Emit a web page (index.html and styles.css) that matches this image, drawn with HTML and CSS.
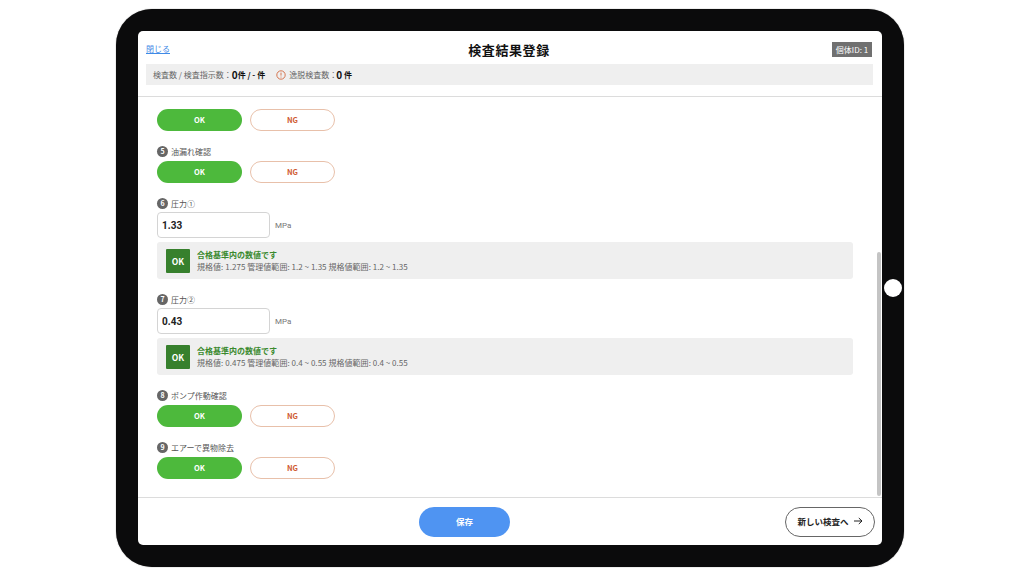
FILE: index.html
```html
<!DOCTYPE html>
<html lang="ja">
<head>
  <meta charset="utf-8">
  <title>検査結果登録</title>
  <link rel="stylesheet" href="styles.css">
</head>
<body>
  <div class="device">
    <span class="home-button"></span>
    <div class="screen">
      <header class="header">
        <div class="title-row">
          <a class="close-link">閉じる</a>
          <h1 class="title">検査結果登録</h1>
          <span class="unit-id">個体ID: 1</span>
        </div>
        <div class="info-bar">
          <span>検査数 / 検査指示数：</span><b class="count">0</b><b>件 / - 件</b>
          <svg class="warn-icon" viewBox="0 0 10 10" width="10" height="10">
            <circle cx="5" cy="5" r="4.2" fill="none" stroke="#d2693f" stroke-width="0.9"/>
            <path d="M5 2.6V5.6M5 6.6V7.5" stroke="#d2693f" stroke-width="0.9" fill="none"/>
          </svg>
          <span class="over-label">逸脱検査数：</span><b class="count">0</b><b>&nbsp;件</b>
        </div>
      </header>

      <main class="content">
        <span class="scroll-thumb"></span>

        <div class="judge-row first-row">
          <button class="btn-ok">OK</button>
          <button class="btn-ng">NG</button>
        </div>

        <section class="item">
          <div class="item-label"><span class="num">5</span>油漏れ確認</div>
          <div class="judge-row">
            <button class="btn-ok">OK</button>
            <button class="btn-ng">NG</button>
          </div>
        </section>

        <section class="item">
          <div class="item-label"><span class="num">6</span>圧力①</div>
          <div class="input-row">
            <input class="value-input" type="text" value="1.33">
            <span class="unit">MPa</span>
          </div>
          <div class="result">
            <span class="result-badge">OK</span>
            <div>
              <p class="result-title">合格基準内の数値です</p>
              <p class="result-text">規格値: 1.275 管理値範囲: 1.2 ~ 1.35 規格値範囲: 1.2 ~ 1.35</p>
            </div>
          </div>
        </section>

        <section class="item">
          <div class="item-label"><span class="num">7</span>圧力②</div>
          <div class="input-row">
            <input class="value-input" type="text" value="0.43">
            <span class="unit">MPa</span>
          </div>
          <div class="result">
            <span class="result-badge">OK</span>
            <div>
              <p class="result-title">合格基準内の数値です</p>
              <p class="result-text">規格値: 0.475 管理値範囲: 0.4 ~ 0.55 規格値範囲: 0.4 ~ 0.55</p>
            </div>
          </div>
        </section>

        <section class="item">
          <div class="item-label"><span class="num">8</span>ポンプ作動確認</div>
          <div class="judge-row">
            <button class="btn-ok">OK</button>
            <button class="btn-ng">NG</button>
          </div>
        </section>

        <section class="item">
          <div class="item-label"><span class="num">9</span>エアーで異物除去</div>
          <div class="judge-row">
            <button class="btn-ok">OK</button>
            <button class="btn-ng">NG</button>
          </div>
        </section>
      </main>

      <footer class="footer">
        <button class="btn-save">保存</button>
        <button class="btn-next">新しい検査へ
          <svg viewBox="0 0 10 10" width="10" height="10">
            <path d="M1 5H9M5.8 2L9 5L5.8 8" fill="none" stroke="#222" stroke-width="1"/>
          </svg>
        </button>
      </footer>
    </div>
  </div>
</body>
</html>
```

FILE: styles.css
```css
* {
  box-sizing: border-box;
}

body {
  margin: 0;
  height: 574px;
  overflow: hidden;
  padding: 9px 0 0 116px;
  background-color: #fff;
  font-family: "Noto Sans CJK JP", "Noto Sans", sans-serif;
  color: #555;
}

p {
  margin: 0;
}

button {
  font-family: inherit;
  cursor: pointer;
}

.device {
  position: relative;
  width: 788px;
  height: 558px;
  padding: 22px;
  background-color: #0b0b0c;
  border-radius: 36px;
  box-shadow: 0 0 1px #555;
}

.home-button {
  position: absolute;
  left: 768px;
  top: 270px;
  width: 18px;
  height: 18px;
  border-radius: 50%;
  background-color: #fff;
}

.screen {
  display: flex;
  flex-direction: column;
  height: 514px;
  background-color: #fff;
  border-radius: 5px;
  overflow: hidden;
}

/* ヘッダー */
.header {
  height: 66px;
  padding: 10px 9px 0 8px;
  border-bottom: 1px solid #dcdcdc;
}

.title-row {
  display: flex;
  justify-content: space-between;
  align-items: center;
  height: 16px;
  margin-bottom: 7px;
}

.close-link {
  width: 59px;
  margin-bottom: 2px;
  font-size: 8px;
  color: #3f8ae6;
  text-decoration: underline;
}

.title {
  margin: 0;
  font-size: 13px;
  font-weight: 700;
  letter-spacing: 0.6px;
  color: #111;
}

.unit-id {
  width: 40px;
  height: 15px;
  margin: 0 1px 0 19px;
  font-size: 8px;
  line-height: 15px;
  text-align: center;
  color: #fff;
  background-color: #707070;
}

.info-bar {
  display: flex;
  align-items: center;
  height: 21px;
  padding-left: 7px;
  background-color: #efefef;
  font-size: 8px;
  color: #666;
}

.info-bar b {
  color: #111;
  font-size: 8px;
}

.info-bar .count {
  font-size: 10px;
}

.warn-icon {
  margin: 0 3px 0 11px;
}

.over-label {
  margin-right: -1px;
}

/* 検査項目 */
.content {
  position: relative;
  flex: 1;
  padding: 12px 0 0 19px;
}

.scroll-thumb {
  position: absolute;
  right: 1px;
  top: 155px;
  width: 4px;
  height: 244px;
  background-color: #c4c4c4;
  border-radius: 2px;
}

.judge-row {
  display: flex;
  gap: 8px;
}

.item .judge-row {
  margin-top: 2px;
}

.btn-ok,
.btn-ng {
  width: 85px;
  height: 22px;
  padding: 0 0 1px;
  border-radius: 11px;
  font-size: 7.5px;
  font-weight: 700;
}

.btn-ok {
  color: #fff;
  background-color: #4db93c;
  border: none;
}

.btn-ng {
  color: #cf5a30;
  background-color: #fff;
  border: 1.5px solid #e8c0aa;
}

.item {
  margin-top: 12px;
}

.item-label {
  display: flex;
  align-items: center;
  height: 16px;
  font-size: 8px;
  color: #555;
}

.num {
  width: 11px;
  height: 11px;
  margin-right: 3px;
  border-radius: 50%;
  font-size: 7px;
  font-weight: 700;
  line-height: 11px;
  text-align: center;
  color: #fff;
  background-color: #666;
}

.input-row {
  display: flex;
  align-items: center;
  margin-top: 1px;
}

.value-input {
  width: 113px;
  height: 26px;
  padding: 0 4px;
  border: 1px solid #d4d4d4;
  border-radius: 4px;
  font-family: Roboto, sans-serif;
  font-size: 10px;
  font-weight: 700;
  color: #222;
  outline: none;
}

.unit {
  margin-left: 5px;
  font-family: Roboto, sans-serif;
  font-size: 8px;
  color: #777;
}

.result {
  display: flex;
  align-items: center;
  gap: 7px;
  width: 696px;
  height: 37px;
  margin-top: 4px;
  padding-left: 9px;
  background-color: #efefef;
  border-radius: 3px;
}

.result-badge {
  width: 24px;
  height: 24px;
  border-radius: 1px;
  font-size: 8.5px;
  font-weight: 700;
  line-height: 24px;
  text-align: center;
  color: #fff;
  background-color: #37802d;
}

.result-title {
  font-size: 8px;
  font-weight: 700;
  line-height: 12px;
  color: #3a8a2e;
}

.result-text {
  font-size: 8px;
  line-height: 12px;
  letter-spacing: 0.04px;
  color: #666;
}

/* フッター */
.footer {
  display: flex;
  justify-content: flex-end;
  align-items: center;
  gap: 275px;
  height: 48px;
  padding: 0 7px 0 0;
  border-top: 1px solid #dcdcdc;
}

.btn-save {
  width: 91px;
  height: 30px;
  padding: 0 0 2px;
  border: none;
  border-radius: 15px;
  font-size: 8.5px;
  font-weight: 700;
  color: #fff;
  background-color: #4f94f2;
}

.btn-next {
  display: flex;
  justify-content: center;
  align-items: center;
  gap: 4px;
  width: 90px;
  height: 30px;
  padding: 0 0 2px;
  border: 1px solid #666;
  border-radius: 15px;
  font-size: 8.5px;
  font-weight: 700;
  color: #222;
  background-color: #fff;
}
```
